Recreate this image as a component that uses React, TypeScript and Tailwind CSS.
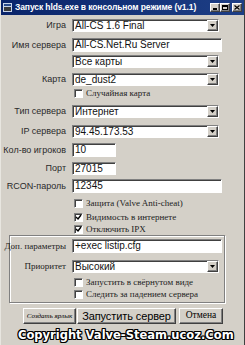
const sunken = "bg-white border border-t-[#808080] border-l-[#808080] border-b-white border-r-white shadow-[inset_1px_1px_0_#404040]"
const raised = "bg-[#d4d0c8] border border-t-white border-l-white border-b-[#404040] border-r-[#404040] shadow-[inset_-1px_-1px_0_#808080]"

function Label({ text, serif }: { text: string; serif?: boolean }) {
  return (
    <div
      className={
        serif
          ? "w-[71px] shrink-0 pr-[6px] text-right font-['Liberation_Serif',serif] text-[9px] leading-none text-[#222]"
          : "w-[71px] shrink-0 pr-[6px] text-right text-[9px] leading-none text-[#2a2a2a]"
      }
    >
      {text}
    </div>
  )
}

function Combo({ value, w = "w-[147px]", h = "h-[13px]" }: { value: string; w?: string; h?: string }) {
  return (
    <div className={`${sunken} ${w} ${h} flex items-center`}>
      <span className="flex-1 pl-[2px] text-[10px] leading-none text-[#111] truncate">{value}</span>
      <div className={`${raised} w-[11px] h-full flex items-center justify-center`}>
        <svg width="5" height="3" viewBox="0 0 5 3">
          <path d="M0 0h5L2.5 3z" fill="#000" />
        </svg>
      </div>
    </div>
  )
}

function Input({ value, w = "w-[150px]", h = "h-[14px]" }: { value: string; w?: string; h?: string }) {
  return (
    <div className={`${sunken} ${w} ${h} flex items-center`}>
      <span className="pl-[2px] text-[10px] leading-none text-[#111]">{value}</span>
    </div>
  )
}

function Check({ label, checked }: { label: string; checked?: boolean }) {
  return (
    <div className="flex items-center h-[10px] pl-[73px] gap-[3px]">
      <div className={`${sunken} w-[9px] h-[9px] flex items-center justify-center`}>
        {checked && (
          <svg width="7" height="7" viewBox="0 0 7 7">
            <path d="M1 3l2 2 3-4" stroke="#000" strokeWidth="1.4" fill="none" />
          </svg>
        )}
      </div>
      <span className="font-['Liberation_Serif',serif] text-[9px] leading-none text-[#222]">{label}</span>
    </div>
  )
}

export default function App() {
  return (
    <div className="w-[245px] h-[345px] overflow-hidden bg-[#d4d0c8] font-['Liberation_Sans',Arial,sans-serif] text-black border-r border-[#404040] border-l border-l-[#e8e6e0]">
      {/* title bar */}
      <div className="h-[15px] flex items-center bg-gradient-to-r from-[#0a246a] to-[#1e3f86] pl-[2px] pr-[2px]">
        <svg width="9" height="9" viewBox="0 0 9 9" className="shrink-0">
          <rect x="0" y="0" width="9" height="9" fill="#c8d4e8" />
          <rect x="1" y="1" width="7" height="2" fill="#2a4a8a" />
          <rect x="1" y="4" width="7" height="4" fill="#3a3a3a" />
        </svg>
        <span className="ml-[3px] text-white font-bold text-[8.5px] leading-none tracking-[-0.1px] whitespace-nowrap">
          Запуск hlds.exe в консольном режиме (v1.1)
        </span>
        <div className="ml-auto flex items-center">
          <div className={`${raised} w-[10px] h-[9px] flex items-end justify-center pb-[1px]`}>
            <div className="w-[4px] h-[2px] bg-black" />
          </div>
          <div className={`${raised} w-[10px] h-[9px] flex items-center justify-center`}>
            <div className="w-[6px] h-[5px] border border-black border-t-2" />
          </div>
          <div className={`${raised} w-[10px] h-[9px] ml-[2px] flex items-center justify-center`}>
            <svg width="6" height="5" viewBox="0 0 6 5">
              <path d="M0.5 0.5l5 4M5.5 0.5l-5 4" stroke="#000" strokeWidth="1.2" />
            </svg>
          </div>
        </div>
      </div>

      <div className="flex items-center mt-[4px] h-[13px]">
        <Label text="Игра" />
        <Combo value="All-CS 1.6 Final" />
      </div>
      <div className="flex items-center mt-[6px] h-[14px]">
        <Label text="Имя сервера" />
        <Input value="All-CS.Net.Ru Server" />
      </div>
      <div className="flex items-center mt-[3px] h-[13px]">
        <Label text="" />
        <Combo value="Все карты" />
      </div>
      <div className="flex items-center mt-[5px] h-[13px]">
        <Label text="Карта" />
        <Combo value="de_dust2" />
      </div>
      <div className="mt-[2px]">
        <Check label="Случайная карта" />
      </div>
      <div className="flex items-center mt-[7px] h-[13px]">
        <Label text="Тип сервера" />
        <Combo value="Интернет" />
      </div>
      <div className="flex items-center mt-[7px] h-[13px]">
        <Label text="IP сервера" />
        <Combo value="94.45.173.53" />
      </div>
      <div className="flex items-center mt-[5px] h-[14px]">
        <Label text="Кол-во игроков" />
        <Input value="10" w="w-[44px]" />
      </div>
      <div className="flex items-center mt-[5px] h-[13px]">
        <Label text="Порт" />
        <Input value="27015" w="w-[44px]" h="h-[13px]" />
      </div>
      <div className="flex items-center mt-[4px] h-[14px]">
        <Label text="RCON-пароль" />
        <Input value="12345" />
      </div>
      <div className="mt-[5px]">
        <Check label="Защита (Valve Anti-cheat)" />
      </div>
      <div className="mt-[4px]">
        <Check label="Видимость в интернете" checked />
      </div>
      <div className="mt-[2px]">
        <Check label="Отключить IPX" checked />
      </div>

      {/* group box */}
      <div className="mt-[1px] ml-[8px] w-[216px] h-[68px] border border-[#808080] shadow-[inset_1px_1px_0_#fff,1px_1px_0_#fff] pt-[3px]">
        <div className="flex items-center h-[14px] -ml-[9px]">
          <Label text="Доп. параметры" serif />
          <Input value="+exec listip.cfg" />
        </div>
        <div className="flex items-center h-[13px] mt-[7px] -ml-[9px]">
          <Label text="Приоритет" serif />
          <Combo value="Высокий" />
        </div>
        <div className="mt-[4px] -ml-[9px]">
          <Check label="Запустить в свёрнутом виде" />
        </div>
        <div className="mt-[2px] -ml-[9px]">
          <Check label="Следить за падением сервера" />
        </div>
      </div>

      {/* buttons */}
      <div className="flex mt-[5px] ml-[22px] h-[16px] gap-[1px]">
        <div className={`${raised} w-[53px] flex items-center justify-center overflow-hidden`}>
          <span className="font-['Liberation_Serif',serif] italic text-[7px] leading-none whitespace-nowrap">Создать ярлык</span>
        </div>
        <div className={`${raised} w-[99px] flex items-center justify-center overflow-hidden`}>
          <span className="text-[11px] leading-none whitespace-nowrap tracking-[-0.1px]">Запустить сервер</span>
        </div>
        <div className={`${raised} w-[44px] ml-[2px] flex items-center justify-center`}>
          <span className="font-['Liberation_Serif',serif] text-[9.5px] leading-none">Отмена</span>
        </div>
      </div>

      <div className="mt-[4px] pl-[17px] whitespace-nowrap font-['DejaVu_Sans',sans-serif] font-bold text-[11.5px] leading-[14px] text-white [text-shadow:1px_0_0_#000,-1px_0_0_#000,0_1px_0_#000,0_-1px_0_#000,1px_1px_0_#000,-1px_-1px_0_#000,1px_-1px_0_#000,-1px_1px_0_#000]">
        Copyright Valve-Steam.ucoz.Com
      </div>
    </div>
  )
}
